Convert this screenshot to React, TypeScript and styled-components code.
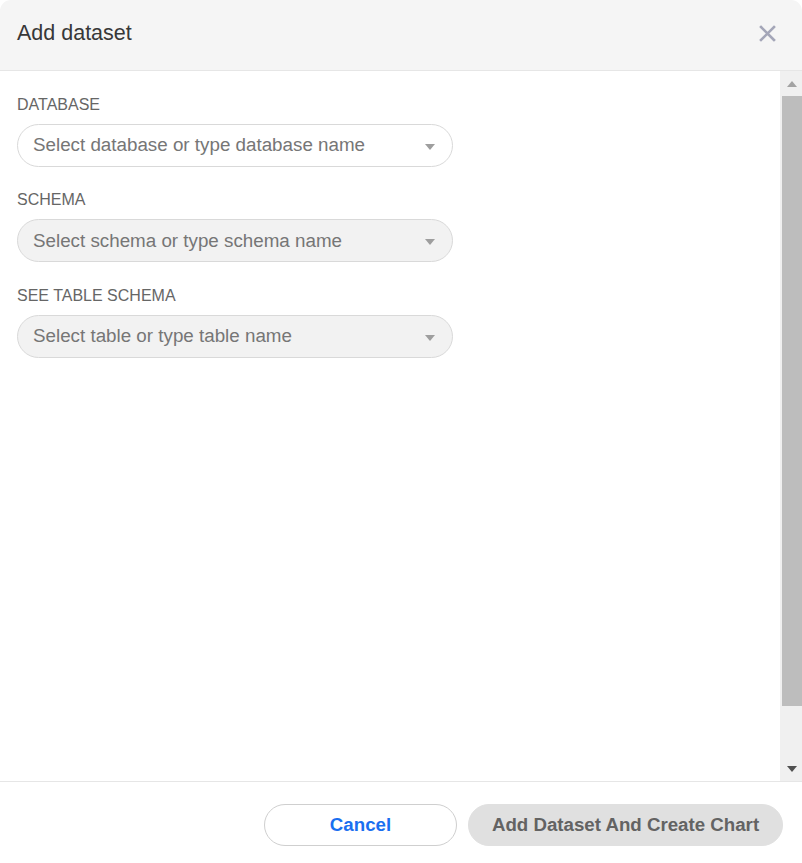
import React from 'react';
import styled, { createGlobalStyle } from 'styled-components';

const GlobalStyle = createGlobalStyle`
  html, body {
    margin: 0;
    padding: 0;
    background: #ffffff;
  }
  body {
    font-family: 'Liberation Sans', Arial, sans-serif;
  }
  * {
    box-sizing: border-box;
  }
`;

const Modal = styled.div`
  display: flex;
  flex-direction: column;
  width: 802px;
  height: 863px;
  background: #fff;
  overflow: hidden;
`;

const Header = styled.div`
  display: flex;
  align-items: center;
  justify-content: space-between;
  height: 71px;
  padding: 0 26px 3px 17px;
  background: #f5f5f5;
  border-bottom: 1px solid #e6e6e6;
  border-radius: 11px 11px 0 0;
  flex-shrink: 0;
`;

const Title = styled.h2`
  margin: 0;
  font-size: 21.5px;
  font-weight: 400;
  color: #383838;
`;

const CloseButton = styled.button`
  display: flex;
  align-items: center;
  justify-content: center;
  width: 18px;
  height: 18px;
  padding: 0;
  border: none;
  background: transparent;
  cursor: pointer;
`;

const BodyRow = styled.div`
  display: flex;
  flex: 1;
  min-height: 0;
`;

const Content = styled.div`
  flex: 1;
  display: flex;
  flex-direction: column;
  gap: 24.9px;
  padding: 25px 17px 0 17px;
`;

const Field = styled.div`
  display: flex;
  flex-direction: column;
  gap: 10px;
`;

const Label = styled.label`
  font-size: 16px;
  line-height: 18px;
  color: #666;
  text-transform: uppercase;
`;

const SelectBox = styled.div<{ $disabled?: boolean }>`
  display: flex;
  align-items: center;
  justify-content: space-between;
  width: 436px;
  height: 42.6px;
  padding: 0 17px 0 15px;
  border: 1px solid #d9d9d9;
  border-radius: 22px;
  background: ${(p) => (p.$disabled ? '#f2f2f2' : '#fff')};
  cursor: ${(p) => (p.$disabled ? 'not-allowed' : 'pointer')};
`;

const Placeholder = styled.span`
  font-size: 18.8px;
  color: #767676;
`;

const Caret = styled.span`
  width: 0;
  height: 0;
  border-left: 5px solid transparent;
  border-right: 5px solid transparent;
  border-top: 6px solid #9e9e9e;
  margin-top: 3px;
`;

const Scrollbar = styled.div`
  display: flex;
  flex-direction: column;
  width: 22px;
  background: #f0f0f0;
`;

const ScrollArrow = styled.div<{ $dir: 'up' | 'down'; $dim?: boolean }>`
  display: flex;
  align-items: center;
  justify-content: center;
  height: 25px;
  padding-left: 2px;

  &::after {
    content: '';
    width: 0;
    height: 0;
    border-left: 5.5px solid transparent;
    border-right: 5.5px solid transparent;
    ${(p) =>
      p.$dir === 'up'
        ? `border-bottom: 6px solid ${p.$dim ? '#a3a3a3' : '#505050'};`
        : `border-top: 6px solid ${p.$dim ? '#a3a3a3' : '#505050'};`}
  }
`;

const ScrollTrack = styled.div`
  flex: 1;
  display: flex;
  flex-direction: column;
  padding: 0 0 49px 2px;
`;

const Thumb = styled.div`
  height: 610px;
  background: #bdbdbd;
`;

const Footer = styled.div`
  display: flex;
  justify-content: flex-end;
  align-items: flex-start;
  gap: 11px;
  height: 82px;
  padding: 22px 19px 0 17px;
  border-top: 1px solid #e6e6e6;
  flex-shrink: 0;
`;

const Button = styled.button<{ $primary?: boolean }>`
  height: 42.4px;
  border-radius: 22px;
  font-family: 'Liberation Sans', Arial, sans-serif;
  font-size: 18.7px;
  font-weight: 700;
  cursor: pointer;
  border: 1px solid ${(p) => (p.$primary ? '#e0e0e0' : '#cfcfcf')};
  background: ${(p) => (p.$primary ? '#e0e0e0' : '#fff')};
  color: ${(p) => (p.$primary ? '#636363' : '#1a6ff0')};
  width: ${(p) => (p.$primary ? '315px' : '193px')};
`;

const fields = [
  { label: 'Database', placeholder: 'Select database or type database name', disabled: false },
  { label: 'Schema', placeholder: 'Select schema or type schema name', disabled: true },
  { label: 'See table schema', placeholder: 'Select table or type table name', disabled: true },
];

const App: React.FC = () => {
  return (
    <>
      <GlobalStyle />
      <Modal>
        <Header>
          <Title>Add dataset</Title>
          <CloseButton aria-label="Close">
            <svg width="17" height="17" viewBox="0 0 17 17">
              <path
                d="M2 2 L15 15 M15 2 L2 15"
                stroke="#a4a6b8"
                strokeWidth="2.6"
                strokeLinecap="square"
              />
            </svg>
          </CloseButton>
        </Header>
        <BodyRow>
          <Content>
            {fields.map((f) => (
              <Field key={f.label}>
                <Label>{f.label}</Label>
                <SelectBox $disabled={f.disabled}>
                  <Placeholder>{f.placeholder}</Placeholder>
                  <Caret />
                </SelectBox>
              </Field>
            ))}
          </Content>
          <Scrollbar>
            <ScrollArrow $dir="up" $dim />
            <ScrollTrack>
              <Thumb />
            </ScrollTrack>
            <ScrollArrow $dir="down" />
          </Scrollbar>
        </BodyRow>
        <Footer>
          <Button>Cancel</Button>
          <Button $primary>Add Dataset And Create Chart</Button>
        </Footer>
      </Modal>
    </>
  );
};

export default App;
